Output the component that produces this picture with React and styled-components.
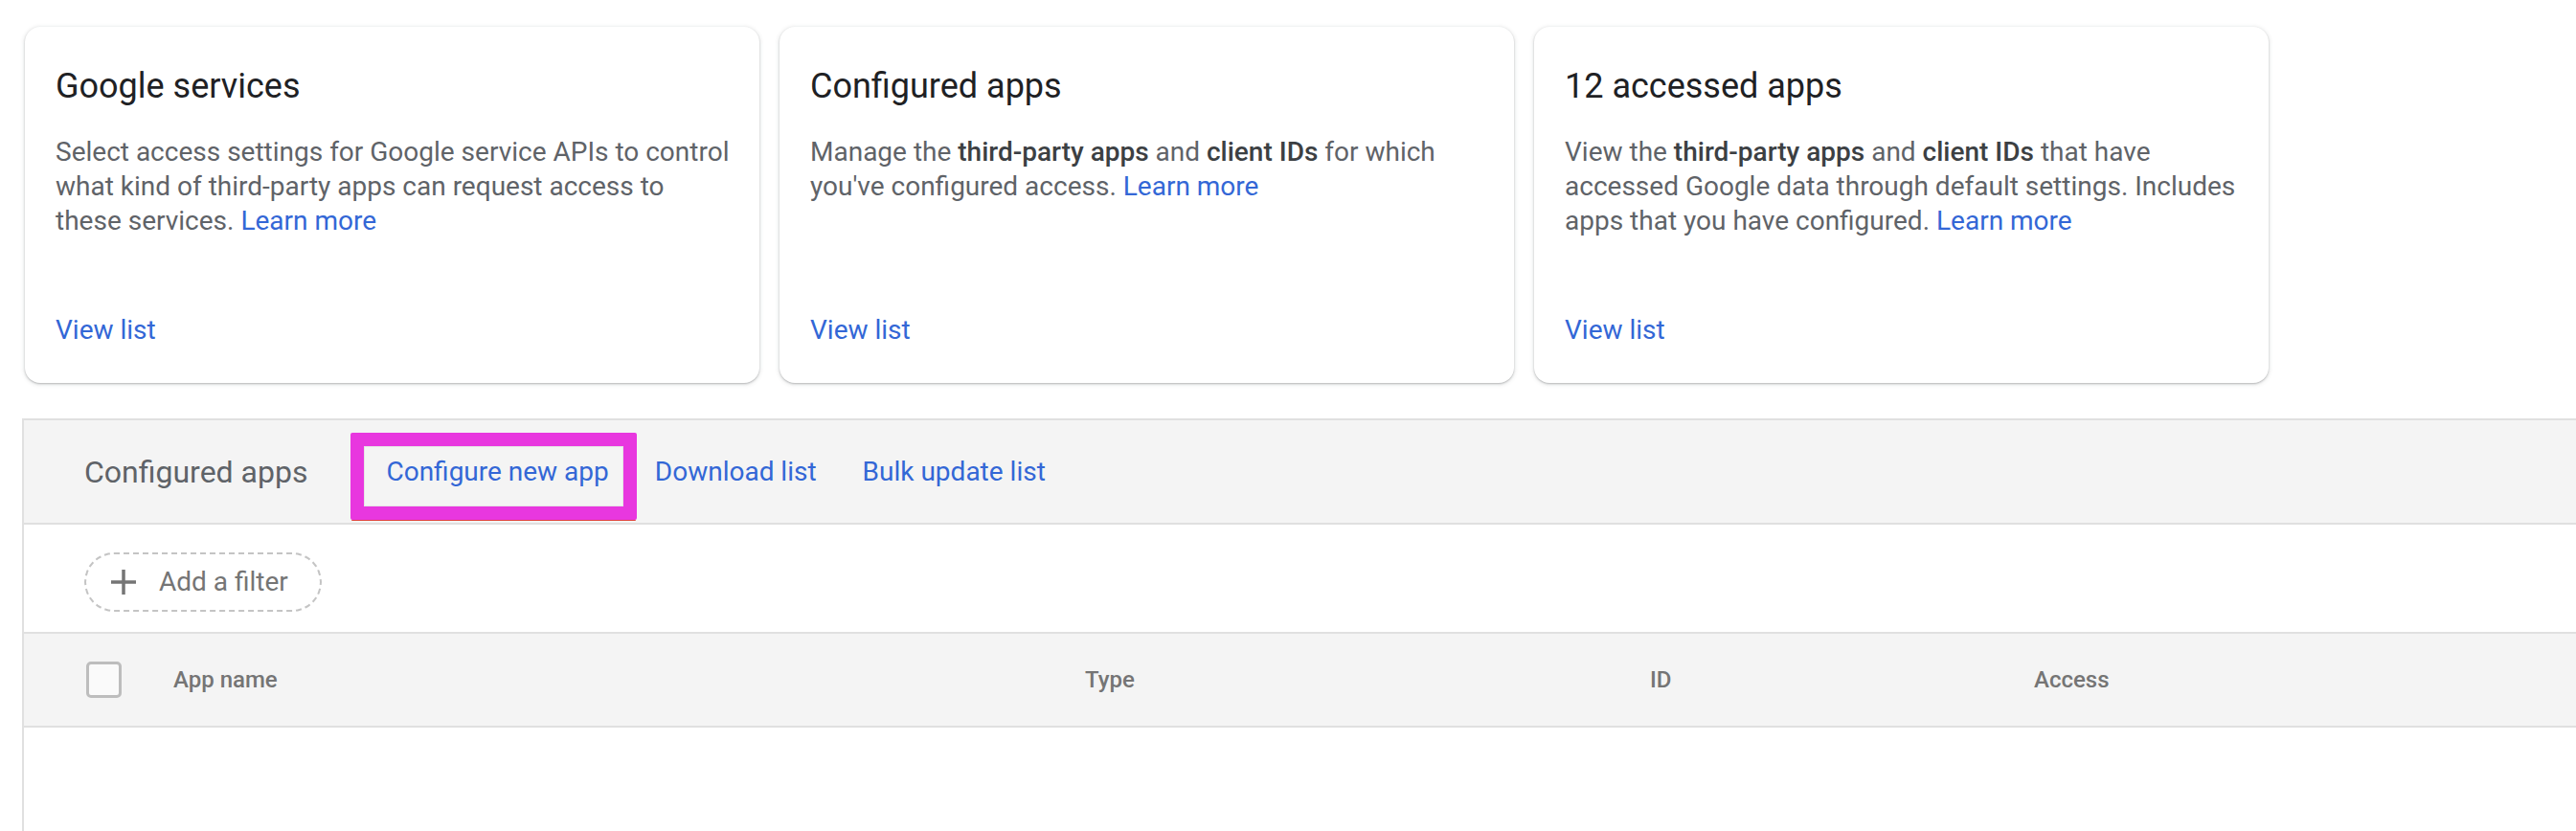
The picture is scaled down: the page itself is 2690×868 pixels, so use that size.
import React from 'react'
import styled, { createGlobalStyle } from 'styled-components'

const GlobalStyle = createGlobalStyle`
  html, body {
    margin: 0;
    padding: 0;
    background: #fff;
  }
  body {
    font-family: Roboto, 'Noto Sans', Arial, sans-serif;
    -webkit-font-smoothing: antialiased;
  }
`

const Page = styled.div`
  padding: 28px 0 0 23px;
`

const CardRow = styled.div`
  display: flex;
  gap: 21px;
  padding-left: 3px;
`

const Card = styled.section`
  box-sizing: border-box;
  width: 767px;
  height: 372px;
  padding: 42px 28px 0 32px;
  border-radius: 16px;
  background: #fff;
  box-shadow: 0 1px 2px rgba(60, 64, 67, 0.3), 0 1px 4px 1px rgba(60, 64, 67, 0.12);
  display: flex;
  flex-direction: column;
`

const CardTitle = styled.h2`
  margin: 0;
  font-size: 36px;
  line-height: 40px;
  font-weight: 400;
  color: #202124;
`

const CardText = styled.p`
  margin: 31px 0 0;
  flex: 1;
  font-size: 28px;
  line-height: 36px;
  color: #5f6368;
  & b {
    font-weight: 500;
    color: #3c4043;
  }
`

const Link = styled.a`
  color: #3367d6;
  text-decoration: none;
  cursor: pointer;
`

const ViewList = styled(Link)`
  font-size: 28px;
  line-height: 36px;
  margin-bottom: 37px;
  align-self: flex-start;
`

const Panel = styled.div`
  margin-top: 37px;
  border-top: 2px solid #e0e0e0;
  border-left: 2px solid #e0e0e0;
`

const Toolbar = styled.div`
  display: flex;
  align-items: center;
  height: 107px;
  padding-left: 63px;
  background: #f4f4f4;
  border-bottom: 2px solid #e0e0e0;
`

const ToolbarTitle = styled.span`
  font-size: 32px;
  color: #5f6368;
  margin-right: 58px;
`

const ToolButton = styled.a`
  position: relative;
  display: flex;
  align-items: center;
  height: 72px;
  padding: 0 24px;
  font-size: 28px;
  color: #3367d6;
  cursor: pointer;
`

const Highlight = styled.span`
  position: absolute;
  left: -13px;
  right: -5px;
  top: -5px;
  bottom: -14px;
  border: 14px solid #e837df;
  border-radius: 2px;
  box-shadow: 0 2px 0 -1px #e0413c, inset 0 0 0 1px rgba(0, 0, 0, 0.06);
  pointer-events: none;
`

const FilterRow = styled.div`
  display: flex;
  align-items: center;
  height: 114px;
  padding: 7px 0 0 63px;
  box-sizing: border-box;
  border-bottom: 2px solid #e0e0e0;
`

const FilterChip = styled.button`
  display: flex;
  align-items: center;
  gap: 22px;
  height: 62px;
  padding: 0 33px 0 24px;
  border: 2px dashed #c4c4c4;
  border-radius: 31px;
  background: #fff;
  font-family: inherit;
  font-size: 28px;
  color: #757575;
  cursor: pointer;
`

const HeaderRow = styled.div`
  display: grid;
  grid-template-columns: 91px 952px 590px 401px 1fr;
  align-items: center;
  height: 96px;
  padding-left: 65px;
  background: #f4f4f4;
  border-bottom: 2px solid #e0e0e0;
`

const HeaderCell = styled.span`
  font-size: 24px;
  font-weight: 500;
  color: #757575;
`

const Checkbox = styled.span`
  box-sizing: border-box;
  width: 37px;
  height: 38px;
  border: 3px solid #bdbdbd;
  border-radius: 5px;
  background: #fafafa;
`

const EmptyBody = styled.div`
  height: 120px;
`

const PlusIcon = () => (
  <svg width="30" height="30" viewBox="0 0 30 30">
    <path d="M15 2v26M2 15h26" stroke="#757575" strokeWidth="3.5" fill="none" />
  </svg>
)

const cards = [
  {
    title: 'Google services',
    text: (
      <>
        Select access settings for Google service APIs to control what kind of third-party apps can
        request access to these services.{' '}
      </>
    ),
  },
  {
    title: 'Configured apps',
    text: (
      <>
        Manage the <b>third-party apps</b> and <b>client IDs</b> for which you've configured
        access.{' '}
      </>
    ),
  },
  {
    title: '12 accessed apps',
    text: (
      <>
        View the <b>third-party apps</b> and <b>client IDs</b> that have accessed Google data
        through default settings. Includes apps that you have configured.{' '}
      </>
    ),
  },
]

export default function App() {
  return (
    <Page>
      <GlobalStyle />
      <CardRow>
        {cards.map((card) => (
          <Card key={card.title}>
            <CardTitle>{card.title}</CardTitle>
            <CardText>
              {card.text}
              <Link>Learn more</Link>
            </CardText>
            <ViewList>View list</ViewList>
          </Card>
        ))}
      </CardRow>
      <Panel>
        <Toolbar>
          <ToolbarTitle>Configured apps</ToolbarTitle>
          <ToolButton>
            Configure new app
            <Highlight />
          </ToolButton>
          <ToolButton>Download list</ToolButton>
          <ToolButton>Bulk update list</ToolButton>
        </Toolbar>
        <FilterRow>
          <FilterChip>
            <PlusIcon />
            Add a filter
          </FilterChip>
        </FilterRow>
        <HeaderRow>
          <Checkbox />
          <HeaderCell>App name</HeaderCell>
          <HeaderCell>Type</HeaderCell>
          <HeaderCell>ID</HeaderCell>
          <HeaderCell>Access</HeaderCell>
        </HeaderRow>
        <EmptyBody />
      </Panel>
    </Page>
  )
}
